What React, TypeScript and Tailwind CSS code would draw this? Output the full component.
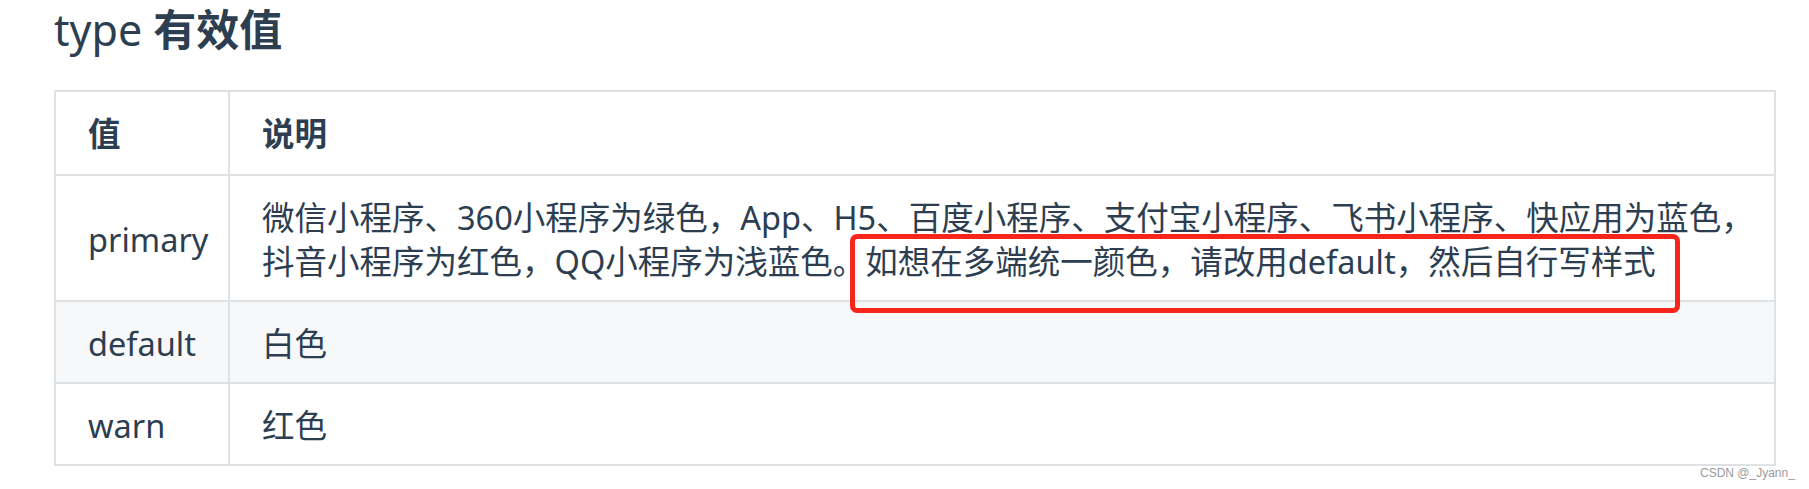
import React from 'react';

const rows = [
  {
    value: 'primary',
    desc: (
      <>
        微信小程序、360小程序为绿色，App、H5、百度小程序、支付宝小程序、飞书小程序、快应用为蓝色，抖音小程序为红色，QQ小程序为浅蓝色。
        <span className="relative">
          如想在多端统一颜色，请改用default，然后自行写样式
          {/* red annotation box */}
          <span className="absolute left-[-15px] right-[-24px] top-[-5px] bottom-[-29px] rounded-[7px] border-[5px] border-[#f8251b] pointer-events-none" />
        </span>
      </>
    ),
    striped: false,
  },
  { value: 'default', desc: '白色', striped: true },
  { value: 'warn', desc: '红色', striped: false },
];

export default function App() {
  return (
    <div
      className="relative w-[1809px] h-[489px] bg-white text-[#2c3e50] overflow-hidden"
      style={{ fontFamily: '"Noto Sans", "Noto Sans CJK SC", sans-serif' }}
    >
      <div className="pl-[54px] pt-[8px]">
        <h3 className="text-[43px] leading-[43px] m-0">
          <span className="font-normal">type </span>
          <span className="font-bold">有效值</span>
        </h3>

        <table className="mt-[39px] w-[1722px] border-collapse text-[32.5px] leading-[44px]">
          <thead>
            <tr>
              <th className="w-[174px] border-2 border-[#dfe2e5] pl-[32px] pr-[14px] pt-[20px] pb-[18px] text-left font-bold">值</th>
              <th className="border-2 border-[#dfe2e5] pl-[32px] pr-[14px] pt-[20px] pb-[18px] text-left font-bold">说明</th>
            </tr>
          </thead>
          <tbody>
            {rows.map((r) => (
              <tr key={r.value} className={r.striped ? 'bg-[#f6f8fa]' : 'bg-white'}>
                <td className="border-2 border-[#dfe2e5] pl-[32px] pr-[14px] pt-[20px] pb-[16px]">{r.value}</td>
                <td className="border-2 border-[#dfe2e5] pl-[32px] pr-[14px] pt-[20px] pb-[16px]">{r.desc}</td>
              </tr>
            ))}
          </tbody>
        </table>
      </div>

      <div
        className="absolute left-[1700px] top-[466px] text-[12px] leading-[14px] text-[#9b9b9b]"
        style={{ fontFamily: '"Liberation Sans", Arial, sans-serif' }}
      >
        CSDN @_Jyann_
      </div>
    </div>
  );
}
